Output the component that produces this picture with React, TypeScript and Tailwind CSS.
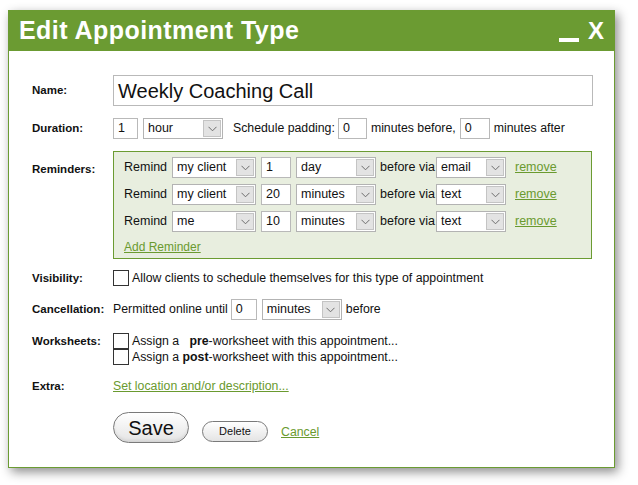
import React from "react";

const FONT = { fontFamily: '"Liberation Sans", Arial, sans-serif' };

function Chevron() {
  return (
    <svg width="9" height="6" viewBox="0 0 9 6" fill="none">
      <path d="M0.5 0.8 L4.5 4.8 L8.5 0.8" stroke="#6d6d6d" strokeWidth="1" />
    </svg>
  );
}

function Select({ value, w }: { value: string; w: string }) {
  return (
    <div className={`flex h-[21px] ${w} items-stretch border border-[#b3b3b3] bg-white`}>
      <div className="flex flex-1 items-center pl-[4px] text-[12.5px] text-[#111]">{value}</div>
      <div className="m-[1px] flex w-[18px] items-center justify-center border border-[#c4c4c4] bg-[#e3e3e3]">
        <Chevron />
      </div>
    </div>
  );
}

function Input({ value, w }: { value: string; w: string }) {
  return (
    <div className={`flex h-[21px] ${w} items-center border border-[#b9b9b9] bg-white pl-[4px] text-[12.5px] text-[#111]`}>
      {value}
    </div>
  );
}

function Checkbox() {
  return <div className="h-[16px] w-[16px] shrink-0 border border-[#333] bg-white" />;
}

function Label({ children }: { children: React.ReactNode }) {
  return <div className="w-[81px] shrink-0 text-[11.5px] font-bold text-[#111]">{children}</div>;
}

function ReminderRow({ who, n, unit, via }: { who: string; n: string; unit: string; via: string }) {
  return (
    <div className="flex h-[21px] items-center text-[12.5px] text-[#111]">
      <span className="w-[48px]">Remind</span>
      <Select value={who} w="w-[84px]" />
      <div className="w-[5px]" />
      <Input value={n} w="w-[30px]" />
      <div className="w-[5px]" />
      <Select value={unit} w="w-[80px]" />
      <span className="ml-[4px] w-[56px]">before via</span>
      <Select value={via} w="w-[70px]" />
      <a className="ml-[9px] text-[#6a9a2f] underline">remove</a>
    </div>
  );
}

export default function App() {
  return (
    <div className="h-[485px] w-[638px] bg-white" style={FONT}>
      <div className="pl-[8px] pt-[10px]">
        <div className="w-[607px] shadow-[3px_4px_10px_rgba(0,0,0,0.45)]">
          <div className="flex h-[41px] items-center justify-between bg-[#6b9b32] pl-[11px] pr-[11px] text-white">
            <span className="text-[25px] font-bold leading-none tracking-[0.45px]">Edit Appointment Type</span>
            <div className="flex items-end">
              <div className="mb-[1px] mr-[9px] h-[4px] w-[20px] bg-white" />
              <span className="text-[24px] font-bold leading-none">X</span>
            </div>
          </div>
          <div className="border-x border-b border-[#6b9b32] bg-white pb-[24px] pl-[23px] pt-[24px]">
            {/* Name */}
            <div className="flex items-center">
              <Label>Name:</Label>
              <div className="flex h-[31px] w-[480px] items-center border border-[#b9b9b9] pl-[4px] text-[20px] text-[#111]">
                Weekly Coaching Call
              </div>
            </div>
            {/* Duration */}
            <div className="mt-[12px] flex items-center text-[12.3px] text-[#111]">
              <Label>Duration:</Label>
              <Input value="1" w="w-[25px]" />
              <div className="w-[5px]" />
              <Select value="hour" w="w-[80px]" />
              <span className="ml-[10px]">Schedule padding:</span>
              <div className="w-[3px]" />
              <Input value="0" w="w-[29px]" />
              <span className="ml-[4px]">minutes before,</span>
              <div className="w-[4px]" />
              <Input value="0" w="w-[30px]" />
              <span className="ml-[4px]">minutes after</span>
            </div>
            {/* Reminders */}
            <div className="mt-[12px] flex items-start">
              <div className="pt-[10px]">
                <Label>Reminders:</Label>
              </div>
              <div className="h-[108px] w-[479px] border border-[#6b9b32] bg-[#e8eedf] pl-[10px] pt-[5px]">
                <div className="flex flex-col gap-[6px]">
                  <ReminderRow who="my client" n="1" unit="day" via="email" />
                  <ReminderRow who="my client" n="20" unit="minutes" via="text" />
                  <ReminderRow who="me" n="10" unit="minutes" via="text" />
                </div>
                <a className="mt-[6px] block text-[12px] text-[#6a9a2f] underline">Add Reminder</a>
              </div>
            </div>
            {/* Visibility */}
            <div className="mt-[11px] flex items-center text-[12.3px] leading-[16px] text-[#111]">
              <Label>Visibility:</Label>
              <Checkbox />
              <span className="ml-[3px]">Allow clients to schedule themselves for this type of appointment</span>
            </div>
            {/* Cancellation */}
            <div className="mt-[13px] flex items-center text-[12.3px] text-[#111]">
              <Label>Cancellation:</Label>
              <span>Permitted online until</span>
              <div className="w-[3px]" />
              <Input value="0" w="w-[26px]" />
              <div className="w-[5px]" />
              <Select value="minutes" w="w-[80px]" />
              <span className="ml-[4px]">before</span>
            </div>
            {/* Worksheets */}
            <div className="mt-[13px] flex items-start text-[12.3px] leading-[16px] text-[#111]">
              <Label>Worksheets:</Label>
              <div className="flex flex-col">
                <div className="flex items-center">
                  <Checkbox />
                  <span className="ml-[3px]">
                    Assign a&nbsp;&nbsp; <b>pre</b>-worksheet with this appointment...
                  </span>
                </div>
                <div className="flex items-center">
                  <Checkbox />
                  <span className="ml-[3px]">
                    Assign a <b>post</b>-worksheet with this appointment...
                  </span>
                </div>
              </div>
            </div>
            {/* Extra */}
            <div className="mt-[13px] flex items-center text-[12.3px] leading-[16px]">
              <Label>Extra:</Label>
              <a className="text-[#6a9a2f] underline">Set location and/or description...</a>
            </div>
            {/* Buttons */}
            <div className="mt-[18px] flex items-end pl-[81px]">
              <div className="flex h-[31px] w-[76px] items-center justify-center rounded-full border border-[#7a7a7a] bg-gradient-to-b from-white to-[#e4e4e4] text-[20px] text-[#111] shadow-[inset_0_-2px_3px_rgba(0,0,0,0.08)]">
                Save
              </div>
              <div className="mb-[1px] ml-[13px] flex h-[21px] w-[66px] items-center justify-center rounded-full border border-[#7a7a7a] bg-gradient-to-b from-white to-[#e4e4e4] text-[11px] text-[#111]">
                Delete
              </div>
              <a className="mb-[3px] ml-[13px] text-[12.3px] leading-[16px] text-[#6a9a2f] underline">Cancel</a>
            </div>
          </div>
        </div>
      </div>
    </div>
  );
}
